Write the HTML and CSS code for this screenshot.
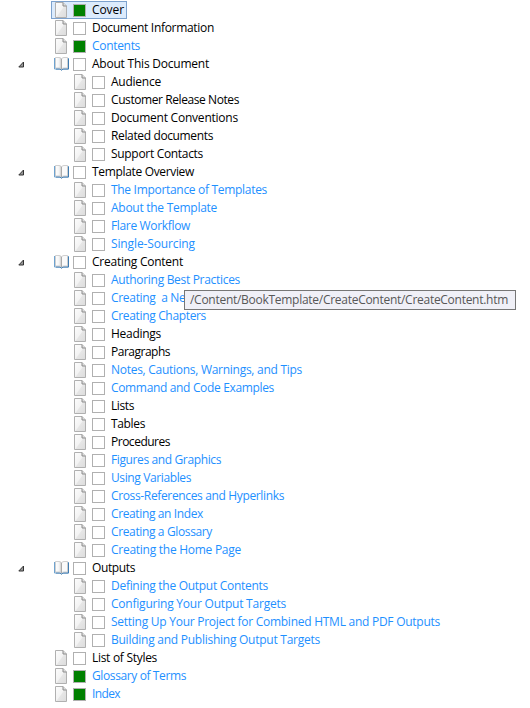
FILE: index.html
```html
<!DOCTYPE html>
<html lang="en">
<head>
<meta charset="utf-8">
<title>Table of Contents</title>
<link rel="stylesheet" href="styles.css">
</head>
<body>
<svg class="defs" aria-hidden="true">
  <defs>
    <linearGradient id="paper" x1="0" y1="0" x2="1" y2="1"><stop offset="0" stop-color="#fdfdfd"/><stop offset=".5" stop-color="#f3f3f3"/><stop offset=".55" stop-color="#e6e6e6"/><stop offset="1" stop-color="#dcdcdc"/></linearGradient>
    <linearGradient id="leaf" x1="0" x2="1"><stop offset="0" stop-color="#fff"/><stop offset=".6" stop-color="#f4f4f4"/><stop offset="1" stop-color="#c4c4c4"/></linearGradient>
    <symbol id="page" viewBox="0 0 12 16"><path d="M.5.5h7.5l3.500 3.500v11.500H.5z" fill="url(#paper)" stroke="#b0b0b0"/><path d="M8 .5v3.500h3.500" fill="#ddd" stroke="#8c8c8c"/></symbol>
    <symbol id="book" viewBox="0 0 15 14"><path d="M.5 1v11h5.500l1.500 1 1.500-1h5.500V1" fill="#e8f2fa" stroke="#6ea3d0"/><path d="M14.500 2v10H9l-1.500 1L6 12H2" fill="none" stroke="#3f7bb0"/><path d="M1.500.5H5q2 0 2.500 1.500v10Q6.500 11 5 11H1.500z" fill="url(#leaf)" stroke="#c4c4c4" stroke-width=".8"/><path d="M13.500.5H10Q8 .5 7.500 2v10q1-1 2.500-1h3.500z" fill="#fafafa" stroke="#c4c4c4" stroke-width=".8"/><path d="M7.500 2v10" stroke="#aaa"/></symbol>
    <symbol id="arrow" viewBox="0 0 7 7"><path d="M5.500 1v5H.8z" fill="#999" stroke="#333"/></symbol>
  </defs>
</svg>
<ul class="tree" id="tree"></ul>
<div class="tooltip"><span>/Content/BookTemplate/CreateContent/CreateContent.htm</span></div>
<script src="tree.js"></script>
</body>
</html>
```
FILE: styles.css
```css
body { margin: 0; background: #fff; position: relative; width: 530px; height: 708px; overflow: hidden; font: 12px/18px "Open Sans", "Noto Sans", sans-serif; color: #000; }
.defs { position: absolute; width: 0; height: 0; }
.tree { list-style: none; margin: 0; padding: 1px 0 0; }
.row { display: flex; align-items: center; height: 18px; padding-left: 18px; }
.toggle { width: 7px; height: 7px; flex: none; margin: 1px 26px 0 0; }
.item { display: flex; align-items: center; box-sizing: border-box; height: 18px; padding: 0 2px 0 3px; border: 1px solid transparent; }
.child .item { margin-left: 19px; }
.selected .item { background: #dcebfc; border-color: #7da2ce; }
.page { width: 12px; height: 16px; flex: none; margin-right: 6px; }
.book { width: 15px; height: 14px; flex: none; margin: 0 4px 0 -1px; }
.box { width: 13px; height: 13px; box-sizing: border-box; flex: none; border: 1px solid #b0b0b0; background: #fff; margin: 1px 6px 0 0; }
.done .box { background: #008000; }
.label { white-space: pre; }
.link .label { color: #1e90ff; }
.tooltip { position: absolute; left: 184px; top: 290px; width: 332px; height: 20px; box-sizing: border-box; border: 1px solid #767676; background: #f0f0f7; color: #575757; padding-left: 5px; white-space: nowrap; }
.tooltip span { display: inline-block; }
```
FILE: tree.js
```js
// [label, classes, label width in px]
const rows = [
  ["Cover", "selected done", 32], ["Document Information", "", 122], ["Contents", "done link", 48],
  ["About This Document", "folder", 117], ["Audience", "child", 50], ["Customer Release Notes", "child", 128],
  ["Document Conventions", "child", 127], ["Related documents", "child", 102], ["Support Contacts", "child", 92],
  ["Template Overview", "folder", 102], ["The Importance of Templates", "child link", 156],
  ["About the Template", "child link", 106], ["Flare Workflow", "child link", 79], ["Single-Sourcing", "child link", 84],
  ["Creating Content", "folder", 91], ["Authoring Best Practices", "child link", 129],
  ["Creating  a New Chapter", "child link", 129], ["Creating Chapters", "child link", 95],
  ["Headings", "child", 50], ["Paragraphs", "child", 59], ["Notes, Cautions, Warnings, and Tips", "child link", 191],
  ["Command and Code Examples", "child link", 163], ["Lists", "child", 23], ["Tables", "child", 34],
  ["Procedures", "child", 59], ["Figures and Graphics", "child link", 110], ["Using Variables", "child link", 80],
  ["Cross-References and Hyperlinks", "child link", 173], ["Creating an Index", "child link", 92],
  ["Creating a Glossary", "child link", 101], ["Creating the Home Page", "child link", 130],
  ["Outputs", "folder", 43], ["Defining the Output Contents", "child link", 157],
  ["Configuring Your Output Targets", "child link", 175],
  ["Setting Up Your Project for Combined HTML and PDF Outputs", "child link", 329],
  ["Building and Publishing Output Targets", "child link", 209], ["List of Styles", "", 65],
  ["Glossary of Terms", "done link", 94], ["Index", "done link", 28]
];
const tree = document.getElementById("tree");
function fit(el, width) {
  const gap = (width - el.getBoundingClientRect().width) / el.textContent.length;
  el.style.letterSpacing = gap + "px";
}
for (const [text, classes, width] of rows) {
  const folder = classes === "folder";
  const li = document.createElement("li");
  li.className = "row " + classes;
  li.innerHTML = `<svg class="toggle">${folder ? '<use href="#arrow"/>' : ""}</svg><div class="item"><svg class="${folder ? "book" : "page"}"><use href="#${folder ? "book" : "page"}"/></svg><i class="box"></i><span class="label"></span></div>`;
  const label = li.querySelector(".label");
  label.textContent = text;
  tree.append(li);
  fit(label, width);
}
fit(document.querySelector(".tooltip span"), 318);
```
